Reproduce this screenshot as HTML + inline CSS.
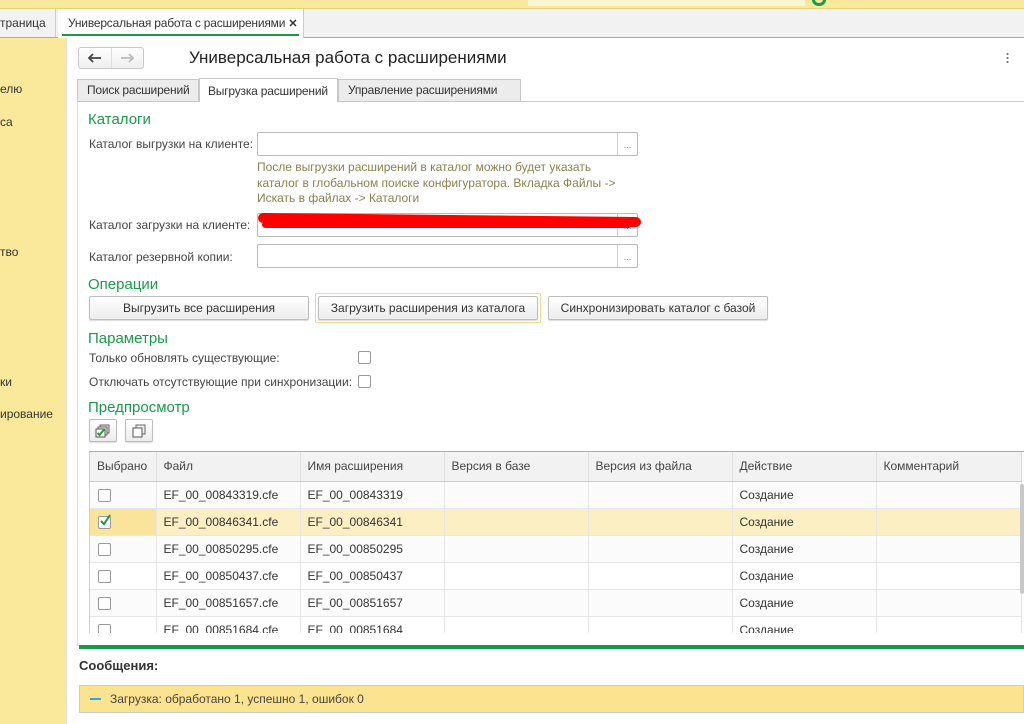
<!DOCTYPE html>
<html><head><meta charset="utf-8"><style>
*{box-sizing:border-box;margin:0;padding:0}
body{width:1024px;height:724px;overflow:hidden;position:relative;background:#fff;font-family:"Liberation Sans",sans-serif;font-size:12px;color:#333}
.a{position:absolute}
.lbl{position:absolute;font-size:12px;color:#444}
.h{position:absolute;color:#1a9a48;font-size:15px}
.inp{position:absolute;height:24px;border:1px solid #b9b9b9;border-radius:2px;background:#fff}
.inp i{position:absolute;right:0;top:0;width:20px;height:22px;border-left:1px solid #ccc;font-style:normal;color:#777;font-size:9px;text-align:center;line-height:24px}
.btn{position:absolute;height:24px;border:1px solid #bdbdbd;border-radius:2px;background:linear-gradient(#fff,#ececec);box-shadow:0 1px 1px rgba(0,0,0,.15);text-align:center;line-height:22px;font-size:12px;color:#333}
.cb{position:absolute;width:13px;height:13px;border:1px solid #999;border-radius:2px;background:#fff}
table{border-collapse:collapse;position:absolute;left:89px;top:452px;width:931px;table-layout:fixed}
td,th{height:27px;font-weight:normal;text-align:left;padding-left:7px;font-size:12px;color:#333;border-right:1px solid #e6e6e6;border-bottom:1px solid #e6e6e6;white-space:nowrap;overflow:hidden}
th{background:#f2f2f2;color:#444;height:29px;border-right:1px solid #ddd;border-bottom:1px solid #ccc}
tr.sel td{background:#fcefc4}
tr.sel td:first-child{background:#fae39a}
tr:nth-child(even) td{background:#fbfbfb}
</style></head><body>
<div class="a" style="left:0;top:0;width:1024px;height:9px;background:#fbe99b;border-bottom:1px solid #e6d27a"></div>
<div class="a" style="left:528px;top:0;width:277px;height:6px;background:#fdf6d3"></div>
<div class="a" style="left:812px;top:-6px;width:14px;height:12px;border-radius:50%;border:3px solid #1a9a48"></div>
<div class="a" style="left:0;top:9px;width:1024px;height:29px;background:#f2f2f2;border-bottom:1px solid #aaa"></div>
<div class="a" style="left:0;top:9px;width:56px;height:28px;border-right:1px solid #ccc;line-height:28px;font-size:12px;color:#333">траница</div>
<div class="a" style="left:58px;top:9px;width:246px;height:29px;background:#fff;border-right:1px solid #ccc"></div>
<div class="a" style="left:62px;top:9px;height:27px;line-height:28px;font-size:12px;color:#333;border-bottom:2px solid #1a9a48;width:237px;padding-left:6px;white-space:nowrap;letter-spacing:-0.2px">Универсальная работа с расширениями <b style="font-size:11px">✕</b></div>
<div class="a" style="left:0;top:38px;width:67px;height:686px;background:#fbe99b;border-right:1px solid #ddd"></div>
<div class="lbl" style="left:0;top:82px;color:#333">елю</div>
<div class="lbl" style="left:0;top:115px;color:#333">са</div>
<div class="lbl" style="left:0;top:245px;color:#333">тво</div>
<div class="lbl" style="left:0;top:375px;color:#333">ки</div>
<div class="lbl" style="left:0;top:407px;color:#333">ирование</div>
<div class="a" style="left:78px;top:47px;width:66px;height:22px;border:1px solid #c8c8c8;border-radius:3px;background:linear-gradient(#fff,#eee)"></div>
<div class="a" style="left:111px;top:48px;width:1px;height:20px;background:#ddd"></div>
<svg class="a" style="left:88px;top:53px" width="14" height="10" viewBox="0 0 14 10"><path d="M1 5h12M5 1L1 5l4 4" stroke="#444" stroke-width="1.8" fill="none"/></svg>
<svg class="a" style="left:120px;top:53px" width="14" height="10" viewBox="0 0 14 10"><path d="M1 5h12M9 1l4 4-4 4" stroke="#bbb" stroke-width="1.8" fill="none"/></svg>
<div class="a" style="left:189px;top:48px;font-size:17px;color:#222">Универсальная работа с расширениями</div>
<div class="a" style="left:1006px;top:52px;width:3px;height:12px;background:radial-gradient(circle,#777 1px,transparent 1.2px) 0 0/3px 4px"></div>
<div class="a" style="left:77px;top:101px;width:947px;height:1px;background:#c8c8c8"></div>
<div class="a" style="left:77px;top:101px;width:1px;height:545px;background:#ddd"></div>
<div class="a" style="left:77px;top:79px;width:122px;height:23px;background:#ececec;border:1px solid #c8c8c8;line-height:21px;padding-left:9px;color:#333;white-space:nowrap;letter-spacing:-0.2px">Поиск расширений</div>
<div class="a" style="left:199px;top:78px;width:139px;height:24px;background:#fff;border:1px solid #c8c8c8;border-bottom:none;line-height:24px;padding-left:8px;color:#333;white-space:nowrap;letter-spacing:-0.2px">Выгрузка расширений</div>
<div class="a" style="left:338px;top:79px;width:183px;height:23px;background:#ececec;border:1px solid #c8c8c8;line-height:21px;padding-left:9px;color:#333;white-space:nowrap;letter-spacing:-0.2px">Управление расширениями</div>
<div class="h" style="left:88px;top:111px">Каталоги</div>
<div class="lbl" style="left:89px;top:137px">Каталог выгрузки на клиенте:</div>
<div class="inp" style="left:257px;top:132px;width:381px"><i>...</i></div>
<div class="a" style="left:257px;top:160px;color:#8a7f4e;font-size:12px;line-height:15.5px">После выгрузки расширений в каталог можно будет указать<br>каталог в глобальном поиске конфигуратора. Вкладка Файлы -&gt;<br>Искать в файлах -&gt; Каталоги</div>
<div class="lbl" style="left:89px;top:218px">Каталог загрузки на клиенте:</div>
<div class="inp" style="left:257px;top:213px;width:381px"><i>...</i></div>
<div class="a" style="left:258px;top:215px;width:383px;height:10px;background:#f00;border-radius:5px;transform:rotate(0.6deg)"></div>
<div class="a" style="left:262px;top:221px;width:370px;height:7px;background:#f00;border-radius:4px"></div>
<div class="lbl" style="left:89px;top:250px">Каталог резервной копии:</div>
<div class="inp" style="left:257px;top:244px;width:381px"><i>...</i></div>
<div class="h" style="left:88px;top:276px">Операции</div>
<div class="btn" style="left:89px;top:296px;width:220px">Выгрузить все расширения</div>
<div class="a" style="left:315px;top:293px;width:226px;height:30px;border:1px solid #f1d98a"></div>
<div class="btn" style="left:318px;top:296px;width:220px">Загрузить расширения из каталога</div>
<div class="btn" style="left:548px;top:296px;width:220px">Синхронизировать каталог с базой</div>
<div class="h" style="left:88px;top:330px">Параметры</div>
<div class="lbl" style="left:89px;top:351px">Только обновлять существующие:</div>
<div class="cb" style="left:358px;top:351px"></div>
<div class="lbl" style="left:89px;top:375px">Отключать отсутствующие при синхронизации:</div>
<div class="cb" style="left:358px;top:375px"></div>
<div class="h" style="left:88px;top:399px">Предпросмотр</div>
<div class="btn" style="left:89px;top:419px;width:28px;height:23px"><svg width="16" height="14" viewBox="0 0 16 14" style="margin-top:4px"><rect x="5" y="1" width="9" height="8" fill="#ddd" stroke="#666"/><rect x="3" y="3" width="9" height="8" fill="#eee" stroke="#666"/><rect x="1" y="5" width="9" height="8" fill="#fff" stroke="#555"/><path d="M2.5 9l2 2 5-6" stroke="#2a9a3a" stroke-width="2" fill="none"/></svg></div>
<div class="btn" style="left:125px;top:419px;width:28px;height:23px"><svg width="16" height="14" viewBox="0 0 16 14" style="margin-top:4px"><rect x="5" y="1" width="9" height="9" fill="#eee" stroke="#666"/><rect x="2" y="4" width="9" height="9" fill="#fff" stroke="#555"/></svg></div>
<div class="a" style="left:89px;top:451px;width:935px;height:182px;overflow:hidden;border-top:1px solid #aaa;border-left:1px solid #ccc">
<table style="left:0;top:0">
<colgroup><col style="width:66px"><col style="width:144px"><col style="width:144px"><col style="width:144px"><col style="width:144px"><col style="width:144px"><col style="width:145px"></colgroup>
<tr><th>Выбрано</th><th>Файл</th><th>Имя расширения</th><th>Версия в базе</th><th>Версия из файла</th><th>Действие</th><th>Комментарий</th></tr>
<tr><td><span class="cb" style="position:relative;display:inline-block;left:1px;top:2px"></span></td><td>EF_00_00843319.cfe</td><td>EF_00_00843319</td><td></td><td></td><td>Создание</td><td></td></tr>
<tr class="sel"><td><span class="cb" style="position:relative;display:inline-block;left:1px;top:2px"><svg width="13" height="13" style="position:absolute;left:0;top:-3px"><path d="M2 7l3 3 6-9" stroke="#1a9a48" stroke-width="2" fill="none"/></svg></span></td><td>EF_00_00846341.cfe</td><td>EF_00_00846341</td><td></td><td></td><td>Создание</td><td></td></tr>
<tr><td><span class="cb" style="position:relative;display:inline-block;left:1px;top:2px"></span></td><td>EF_00_00850295.cfe</td><td>EF_00_00850295</td><td></td><td></td><td>Создание</td><td></td></tr>
<tr><td><span class="cb" style="position:relative;display:inline-block;left:1px;top:2px"></span></td><td>EF_00_00850437.cfe</td><td>EF_00_00850437</td><td></td><td></td><td>Создание</td><td></td></tr>
<tr><td><span class="cb" style="position:relative;display:inline-block;left:1px;top:2px"></span></td><td>EF_00_00851657.cfe</td><td>EF_00_00851657</td><td></td><td></td><td>Создание</td><td></td></tr>
<tr><td><span class="cb" style="position:relative;display:inline-block;left:1px;top:2px"></span></td><td>EF_00_00851684.cfe</td><td>EF_00_00851684</td><td></td><td></td><td>Создание</td><td></td></tr>
</table>
<div class="a" style="left:930px;top:32px;width:4px;height:110px;background:#c8c8c8;border-radius:2px"></div>
</div>
<div class="a" style="left:79px;top:645px;width:945px;height:4px;background:#119a48"></div>
<div class="a" style="left:79px;top:658px;font-size:13px;font-weight:bold;color:#333">Сообщения:</div>
<div class="a" style="left:79px;top:685px;width:945px;height:28px;background:#fce38f;border:1px solid #ccc"></div>
<div class="a" style="left:90px;top:698px;width:11px;height:2px;background:#3aa0e0"></div>
<div class="a" style="left:110px;top:692px;font-size:12px;color:#444">Загрузка: обработано 1, успешно 1, ошибок 0</div>
</body></html>
